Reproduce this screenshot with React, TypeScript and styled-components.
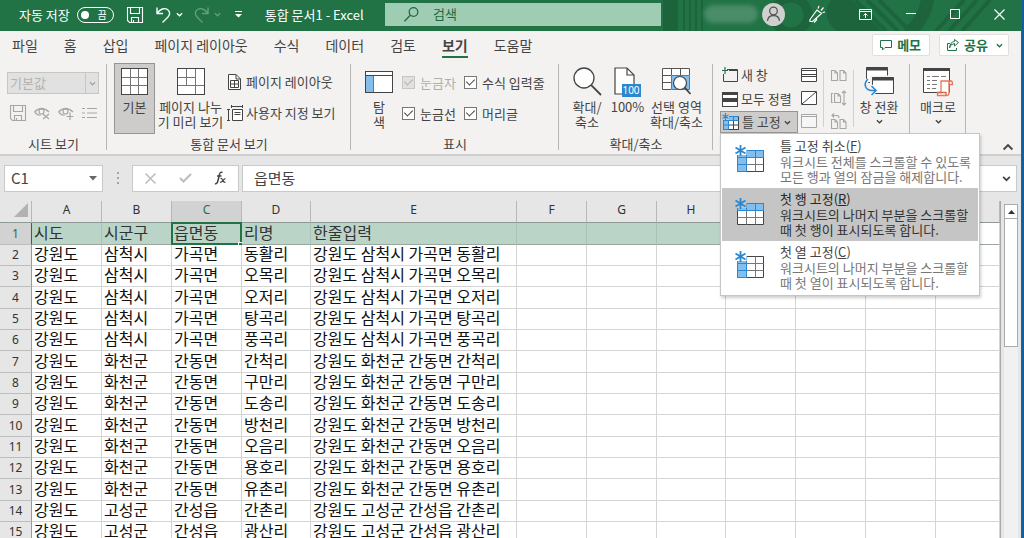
import React from "react";
import styled, { createGlobalStyle, css } from "styled-components";

const GREEN = "#217346";
const INK = "#444444";
const BLUE = "#2b88d0";
const SKY = "#83beec";
const FADED = "#a6a6a6";

const GlobalStyle = createGlobalStyle`
  *, *::before, *::after { box-sizing: border-box; }
  body { margin: 0; background: #10609f; }
  body, button, input, select, table {
    font-family: "Noto Sans CJK KR", "Noto Sans", sans-serif;
    font-size: 13px;
    color: ${INK};
  }
  button { padding: 0; border: 0; background: none; line-height: 15px; }
  svg { display: block; flex: none; overflow: visible; }
`;

/* ---------- shell ---------- */

const Desktop = styled.div`
  height: 100vh;
  padding-right: 2px;
  overflow: hidden;
  background: #10609f;
`;

const Window = styled.div`
  display: flex;
  flex-direction: column;
  height: 100%;
  border-right: 1px solid ${GREEN};
  background: #e6e6e6;
`;

/* ---------- title bar ---------- */

const TitleBar = styled.header`
  position: relative;
  display: flex;
  flex: none;
  height: 31px;
  padding-top: 3px;
  background: ${GREEN};
  color: #fff;
  overflow: hidden;
`;

const TitlePattern = styled.svg`
  position: absolute;
  top: 0;
  right: 0;
`;

const QuickAccess = styled.div`
  display: flex;
  flex: 0 0 385px;
  align-items: center;
  height: 23px;
  padding-left: 19px;
  white-space: nowrap;
`;

const SwitchLabel = styled.label`
  display: flex;
  align-items: center;
  gap: 7px;
  margin-right: 13px;
  line-height: 20px;
`;

const SwitchTrack = styled.span`
  position: relative;
  display: flex;
  align-items: center;
  justify-content: flex-end;
  width: 37px;
  height: 16px;
  padding-right: 6px;
  border: 1px solid #fff;
  border-radius: 8px;
  font-size: 10px;
  line-height: 14px;
`;

const SwitchInput = styled.input`
  position: absolute;
  left: 3px;
  top: 3px;
  appearance: none;
  width: 8px;
  height: 8px;
  margin: 0;
  border-radius: 50%;
  background: #fff;
`;

const BarButton = styled.button<{ $gap?: number; $dim?: boolean }>`
  display: flex;
  align-items: center;
  gap: 5px;
  margin-right: ${(p) => p.$gap ?? 0}px;
  opacity: ${(p) => (p.$dim ? 0.3 : 1)};
`;

const DocumentTitle = styled.h1`
  margin: 0;
  font-size: 13px;
  font-weight: 400;
  line-height: 26px;
`;

const SearchBox = styled.label`
  position: relative;
  display: flex;
  flex: 0 1 276px;
  align-items: center;
  gap: 14px;
  height: 23px;
  padding: 0 0 1px 19px;
  background: #9fcdb3;
`;

const SearchInput = styled.input`
  flex: 1;
  min-width: 0;
  padding: 0;
  border: 0;
  outline: 0;
  background: transparent;
  line-height: 20px;
  color: #1d6a40;
  &::placeholder { color: #1d6a40; opacity: 1; }
`;

const Account = styled.div`
  position: relative;
  display: flex;
  align-items: center;
  height: 22px;
  margin-left: auto;
`;

const MaskedName = styled.span`
  width: 54px;
  height: 18px;
  margin-right: 4px;
  border-radius: 9px;
  background: #4a8c68;
  filter: blur(2px);
`;

const Avatar = styled.span`
  display: grid;
  place-items: center;
  width: 23px;
  height: 23px;
  border-radius: 50%;
  background: #d0d0d0;
`;

const WindowButtons = styled.div`
  display: flex;
  align-items: center;
  margin-left: 24px;
  margin-right: 16px;
  gap: 34px;
`;

/* ---------- tabs ---------- */

const TabBar = styled.nav`
  display: flex;
  flex: none;
  align-items: center;
  height: 30px;
  padding: 0 12px 2px;
  gap: 26px;
  background: #f3f2f1;
`;

const Tab = styled.a<{ $active?: boolean }>`
  position: relative;
  font-size: 14px;
  line-height: 20px;
  font-weight: ${(p) => (p.$active ? 700 : 400)};
  color: ${INK};
  text-decoration: none;
  white-space: nowrap;
  ${(p) =>
    p.$active &&
    css`
      &::after {
        content: "";
        position: absolute;
        left: 0;
        right: 0;
        bottom: -3px;
        height: 2px;
        background: ${GREEN};
      }
    `}
`;

const TabActions = styled.div`
  display: flex;
  gap: 9px;
  margin-left: auto;
`;

const ActionButton = styled.button`
  display: flex;
  align-items: center;
  gap: 5px;
  height: 22px;
  padding: 0 5px 0 7px;
  border: 1px solid #e1dfdd;
  border-radius: 2px;
  background: #fff;
  font-weight: 700;
  line-height: 20px;
  color: ${GREEN};
`;

const ActionText = styled.span`
  padding-right: 3px;
`;

/* ---------- ribbon ---------- */

const Ribbon = styled.div`
  position: relative;
  z-index: 2;
  display: flex;
  flex: none;
  height: 95px;
  padding-top: 2px;
  border-bottom: 2px solid #cfcfcf;
  background: #f3f2f1;
`;

const GroupBox = styled.section<{ $width: number }>`
  display: flex;
  flex: 0 0 ${(p) => p.$width}px;
  flex-direction: column;
  position: relative;
  &::after {
    content: "";
    position: absolute;
    right: 0;
    top: 1px;
    height: 86px;
    width: 1px;
    background: #b8b6b4;
  }
`;

const GroupBody = styled.div<{ $left: number; $gap?: number }>`
  display: flex;
  height: 72px;
  gap: ${(p) => p.$gap ?? 0}px;
  padding-left: ${(p) => p.$left}px;
`;

const GroupLabel = styled.h2`
  margin: 0;
  font-size: 13px;
  font-weight: 400;
  line-height: 20px;
  text-align: center;
`;

const BigButton = styled.button<{ $width: number; $pressed?: boolean }>`
  display: flex;
  flex: 0 0 ${(p) => p.$width}px;
  flex-direction: column;
  align-items: center;
  height: 71px;
  border: 1px solid ${(p) => (p.$pressed ? "#979593" : "transparent")};
  background: ${(p) => (p.$pressed ? "#cdcccb" : "transparent")};
  white-space: nowrap;
`;

const BigIcon = styled.span`
  display: grid;
  place-items: center;
  height: 35px;
`;

const BigArrow = styled.span`
  padding-top: 4px;
`;

const Stack = styled.div<{ $top?: number; $gap?: number }>`
  display: flex;
  flex-direction: column;
  align-items: flex-start;
  gap: ${(p) => p.$gap ?? 0}px;
  padding-top: ${(p) => p.$top ?? 0}px;
`;

const SmallButton = styled.button<{ $height?: number }>`
  display: flex;
  align-items: center;
  gap: 3px;
  height: ${(p) => p.$height ?? 22}px;
  line-height: 20px;
  white-space: nowrap;
`;

const IconSlot = styled.span`
  display: grid;
  place-items: center;
  width: 17px;
`;

const IconColumn = styled.div<{ $width: number; $left: number }>`
  display: flex;
  flex: 0 0 ${(p) => p.$width}px;
  flex-direction: column;
  justify-content: space-around;
  height: 70px;
  padding-left: ${(p) => p.$left}px;
`;

const Picker = styled.span`
  position: relative;
  display: block;
  width: 92px;
  height: 22px;
  border: 1px solid #c6c6c6;
  background: #e1e1e1;
`;

const PickerSelect = styled.select`
  appearance: none;
  width: 100%;
  height: 20px;
  padding: 0 0 0 2px;
  border: 0;
  background: transparent;
  line-height: 20px;
  color: #b4b2b0;
  opacity: 1;
`;

const PickerArrow = styled.span`
  position: absolute;
  right: 0;
  top: 0;
  display: grid;
  place-items: center;
  width: 13px;
  height: 20px;
  border-left: 1px solid #c6c6c6;
  pointer-events: none;
`;

const ToolRow = styled.div`
  display: flex;
  align-items: center;
  gap: 8px;
  padding-left: 3px;
`;

const CheckGrid = styled.div`
  display: grid;
  grid-template-columns: 62px auto;
  grid-auto-rows: 31px;
  padding-top: 4px;
`;

const CheckLabel = styled.label<{ $off?: boolean }>`
  display: flex;
  align-items: center;
  gap: 5px;
  line-height: 20px;
  white-space: nowrap;
  color: ${(p) => (p.$off ? "#b1afad" : INK)};
`;

const CheckInput = styled.input`
  appearance: none;
  position: relative;
  width: 13px;
  height: 13px;
  margin: 0;
  border: 1px solid #777;
  background: #fff;
  &:checked::after {
    content: "";
    position: absolute;
    left: 3px;
    top: 0;
    width: 5px;
    height: 8px;
    border: solid #444;
    border-width: 0 1px 1px 0;
    transform: rotate(45deg);
  }
  &:disabled { border-color: #c6c6c6; background: #e1e1e1; }
  &:disabled::after { border-color: #b1afad; }
`;

const Divider = styled.span`
  width: 1px;
  height: 57px;
  margin-top: 7px;
  background: #d2d0ce;
`;

const MenuAnchor = styled.div`
  position: relative;
  margin-left: -2px;
`;

const FreezeButton = styled.button`
  display: flex;
  align-items: center;
  gap: 3px;
  width: 78px;
  height: 22px;
  padding-left: 2px;
  border: 1px solid #979593;
  background: #cdcccb;
  line-height: 20px;
  white-space: nowrap;
`;

const CollapseButton = styled.button`
  align-self: flex-end;
  margin: 0 8px 2px auto;
`;

/* ---------- drop-down menu ---------- */

const Menu = styled.div`
  position: absolute;
  z-index: 5;
  left: 0;
  top: 100%;
  width: 260px;
  padding: 1px;
  border: 1px solid #c6c6c6;
  background: #fff;
  box-shadow: 1px 2px 3px rgba(0, 0, 0, 0.2);
`;

const MenuItem = styled.button<{ $hover?: boolean }>`
  display: flex;
  gap: 15px;
  width: 100%;
  height: 53px;
  padding: 3px 0 0 13px;
  text-align: left;
  white-space: nowrap;
  background: ${(p) => (p.$hover ? "#c5c5c5" : "transparent")};
  color: ${(p) => (p.$hover ? "#262626" : INK)};
`;

const MenuIcon = styled.span`
  padding-top: 7px;
`;

const MenuTitle = styled.span`
  display: block;
  line-height: 16px;
`;

const MenuText = styled.span<{ $hover?: boolean }>`
  display: block;
  line-height: 15px;
  color: ${(p) => (p.$hover ? "#333333" : "#777777")};
`;

/* ---------- formula bar ---------- */

const FormulaRow = styled.div`
  display: flex;
  flex: none;
  align-items: center;
  height: 45px;
  padding: 0 4px 1px;
`;

const FieldBox = styled.div<{ $width?: number }>`
  display: flex;
  flex: ${(p) => (p.$width ? `0 0 ${p.$width}px` : "1")};
  align-items: center;
  min-width: 0;
  height: 27px;
  padding-right: 5px;
  border: 1px solid #c9c9c9;
  background: #fff;
`;

const FieldInput = styled.input<{ $left: number }>`
  flex: 1;
  min-width: 0;
  padding: 0 0 0 ${(p) => p.$left}px;
  border: 0;
  outline: 0;
  background: transparent;
  font-size: 15px;
  line-height: 22px;
`;

const FormulaTools = styled(FieldBox)`
  justify-content: space-between;
  margin-right: 3px;
  padding: 0 11px 0 12px;
`;

const Grip = styled.span`
  display: grid;
  place-items: center;
  flex: 0 0 29px;
`;

/* ---------- sheet ---------- */

const SheetArea = styled.div`
  display: flex;
  flex: 1;
  min-height: 0;
  overflow: hidden;
`;

const SheetPane = styled.div`
  flex: 1;
  min-width: 0;
`;

const Sheet = styled.table`
  width: 100%;
  table-layout: fixed;
  border-collapse: separate;
  border-spacing: 0;
  border-right: 1px solid #a8a8a8;
  background: #fff;
`;

const ColumnHead = styled.th<{ $active?: boolean }>`
  height: 22px;
  padding: 0 0 3px;
  border-right: 1px solid #b8b8b8;
  border-bottom: 1px solid ${(p) => (p.$active ? GREEN : "#8f9a94")};
  background: ${(p) => (p.$active ? "#d2d2d2" : "#e6e6e6")};
  font-family: "Noto Sans", sans-serif;
  font-size: 12px;
  line-height: 16px;
  font-weight: 400;
  color: ${(p) => (p.$active ? GREEN : "#333")};
`;

const Corner = styled(ColumnHead)`
  svg { margin-left: auto; margin-right: 3px; }
`;

const RowHead = styled.th<{ $active?: boolean }>`
  padding: 0;
  border-right: 1px solid ${(p) => (p.$active ? GREEN : "#9a9a9a")};
  border-bottom: 1px solid #bdbdbd;
  background: ${(p) => (p.$active ? "#d2d2d2" : "#e6e6e6")};
  font-family: "Noto Sans", sans-serif;
  font-size: 12px;
  line-height: 16px;
  font-weight: 400;
  color: ${(p) => (p.$active ? GREEN : "#333")};
`;

const Row = styled.tr`
  height: 21px;
  &:nth-child(3n + 1) { height: 22px; }
`;

const Cell = styled.td<{ $filled?: boolean; $head?: boolean; $selected?: boolean }>`
  position: relative;
  padding: 0 0 4px 2px;
  border-right: 1px solid ${(p) => (p.$filled ? "#a9c4b7" : "#d4d4d4")};
  border-bottom: 1px solid ${(p) => (p.$head ? "#9aa8a0" : "#d4d4d4")};
  background: ${(p) => (p.$filled ? "#bbd4c8" : "#fff")};
  font-size: 16px;
  line-height: 16px;
  color: ${(p) => (p.$head ? "#333" : "#111")};
  white-space: nowrap;
  ${(p) =>
    p.$selected &&
    css`
      &::before {
        content: "";
        position: absolute;
        inset: -1px -1px -1px -1px;
        border: 2px solid ${GREEN};
      }
      &::after {
        content: "";
        position: absolute;
        right: -3px;
        bottom: -3px;
        width: 6px;
        height: 5px;
        border: solid #fff;
        border-width: 1px 0 0 1px;
        background: ${GREEN};
      }
    `}
`;

const ScrollTrack = styled.div`
  flex: 0 0 14px;
  margin: 3px 3px 0 3px;
  background: #f1f1f1;
`;

const ScrollUp = styled.button`
  display: grid;
  place-items: center;
  width: 14px;
  height: 15px;
  border: 1px solid #ababab;
  background: #fff;
`;

const ScrollThumb = styled.div`
  height: 128px;
  border: 1px solid #ababab;
  border-top: 0;
  background: #fff;
`;

/* ---------- icons ---------- */

const Chevron = ({ color = INK, size = 7, up = false }: { color?: string; size?: number; up?: boolean }) => (
  <svg width={size} height={size} viewBox="0 0 8 8" fill="none" stroke={color} strokeWidth="1.5">
    <path d={up ? "M0.5 6L4 2.5L7.5 6" : "M1 2.5L4 5.5L7 2.5"} />
  </svg>
);

const SaveIcon = ({ color = "#fff" }: { color?: string }) => (
  <svg width="16" height="16" viewBox="0 0 16 16" fill="none" stroke={color} strokeWidth="1.1">
    <path d="M0.5 0.5H15.5V15.5H2.5L0.5 13.5Z M3.5 0.5V6.5H12.5V0.5 M4.5 15.5V10.5H11.5V15.5 M6.5 13V15" />
  </svg>
);

const UndoIcon = ({ flip = false }: { flip?: boolean }) => (
  <svg width="15" height="16" viewBox="0 0 15 16" fill="none" stroke="#fff" strokeWidth="1.4">
    <g transform={flip ? "matrix(-1 0 0 1 15 0)" : undefined}>
      <path d="M1 0.5V6.5H7 M1.3 6.2C4 2 8.500 0.500 11.500 2.500C14.500 4.800 14 8 12 10L6.500 15.500" />
    </g>
  </svg>
);

const NormalViewIcon = () => (
  <svg width="27" height="27" viewBox="0 0 27 27" fill="none" shapeRendering="crispEdges">
    <rect x="0.5" y="0.5" width="26" height="26" fill="#fff" stroke="#444" />
    <path d="M9.500 1V26M17.500 1V26M1 9.500H26M1 17.500H26" stroke="#777" />
  </svg>
);

const PageBreakIcon = () => (
  <svg width="28" height="27" viewBox="0 0 28 27" fill="none" shapeRendering="crispEdges">
    <rect x="0.5" y="0.5" width="27" height="26" fill="#fff" stroke="#444" />
    <path d="M9.500 1V17M1 9.500H18" stroke="#777" />
    <path d="M18.500 1V26M1 17.500H27" stroke={BLUE} />
  </svg>
);

const PageLayoutIcon = () => (
  <svg width="13" height="16" viewBox="0 0 13 16" fill="none" stroke="#444">
    <path d="M0.500 0.500H8L12.500 5V15.500H0.500Z" fill="#fff" />
    <path d="M8 0.500V5H12.500M2.500 6.500H10.500V13.500H2.500ZM6.500 6.500V13.500M2.500 10H10.500" />
  </svg>
);

const CustomViewIcon = () => (
  <svg width="16" height="16" viewBox="0 0 16 16" fill="none" stroke="#444">
    <path d="M0 4.500H3M0 15.500H3M1.500 4.500V15.500M4.500 0V3M15.500 0V3M4.500 1.500H15.500" />
    <path d="M5.500 4.500H15.500V15.500H5.500Z" fill="#fff" />
    <path d="M7.500 7.500H13.500M7.500 9.500H13.500" />
  </svg>
);

const NavigationIcon = () => (
  <svg width="28" height="22" viewBox="0 0 28 22" fill="none" shapeRendering="crispEdges">
    <rect x="0.500" y="0.500" width="27" height="21" fill="#fff" stroke="#444" />
    <rect x="1" y="5" width="8" height="16" fill={SKY} />
    <path d="M8.500 5V21" stroke={BLUE} />
    <path d="M1 4.500H27" stroke="#444" />
  </svg>
);

const ZoomIcon = () => (
  <svg width="29" height="29" viewBox="0 0 29 29" fill="none" stroke="#444" strokeWidth="1.3">
    <circle cx="11" cy="11" r="10" fill="#fff" />
    <path d="M18.200 18.200L28 28" strokeWidth="1.8" />
  </svg>
);

const HundredIcon = () => (
  <svg width="27" height="29" viewBox="0 0 27 29" fill="none">
    <path d="M1 1H13L20 8V27H1Z" fill="#fff" stroke="#444" strokeWidth="1.200" />
    <path d="M13 1V8H20" stroke="#444" strokeWidth="1.200" />
    <rect x="8" y="17" width="19" height="13" fill={BLUE} />
    <text x="17" y="27" fontSize="10" fill="#fff" textAnchor="middle" fontFamily="Noto Sans, sans-serif">
      100
    </text>
  </svg>
);

const ZoomSelectionIcon = () => (
  <svg width="29" height="27" viewBox="0 0 29 27" fill="none">
    <path d="M0.500 0.500H27.500V21.500H0.500Z" fill="#fff" />
    <path d="M10 8H27V21H10Z" fill={SKY} />
    <path d="M9.500 7.500H27.500V21.500H9.500Z" stroke={BLUE} />
    <path d="M18.500 1V7M9.500 0.500V7M0.500 7.500H9M0.500 14.500H9M9 21.500H0.500V0.500H27.500V7" stroke="#555" />
    <circle cx="18" cy="15" r="6.500" fill="#fff" stroke="#444" strokeWidth="1.200" />
    <path d="M22.700 19.700L28.500 26" stroke="#444" strokeWidth="1.800" />
  </svg>
);

const NewWindowIcon = () => (
  <svg width="16" height="14" viewBox="0 0 16 14" fill="none">
    <path d="M5 1.500H15.500V13.500H1.500V6" stroke="#444" />
    <path d="M7 2.500H15.500" stroke="#444" />
    <path d="M0 2.500H6M3 -1V6" stroke={GREEN} strokeWidth="1.200" />
  </svg>
);

const ArrangeIcon = () => (
  <svg width="16" height="15" viewBox="0 0 16 15" fill="none" stroke="#444" shapeRendering="crispEdges">
    <path d="M0.500 0.500H15.500V6.500H0.500ZM0.500 7.500H15.500V14.500H0.500Z" fill="#fff" />
    <path d="M1 2H15M1 9H15" strokeWidth="2" />
  </svg>
);

const FreezeSmallIcon = () => (
  <svg width="16" height="16" viewBox="0 0 16 16" fill="none">
    <path d="M0.500 2.500H15.500V15.500H0.500Z" fill="#fff" stroke="#444" />
    <path d="M1 3H15V6.500H6V15H1Z" fill={SKY} />
    <path d="M0.500 2.500H15.500M0.500 6.500H15.500M0.500 11H6M0.500 2.500V15.500H5.500M5.500 2.500V15.500M10.500 2.500V6.500" stroke={BLUE} />
    <path d="M6 11H15.500M10.500 7V15.500M6 15.500H15.500V7" stroke="#444" />
    <rect x="-1" y="0" width="7" height="6" fill="#cdcccb" />
    <path d="M2.500 -1V6M-0.500 1L5.500 4.500M5.500 1L-0.500 4.500" stroke={BLUE} strokeWidth="1.200" />
  </svg>
);

const SplitIcon = ({ kind }: { kind: "split" | "hide" | "unhide" }) => {
  const ink = kind === "unhide" ? FADED : "#444";
  return (
    <svg width="16" height="14" viewBox="0 0 16 14" fill="none" stroke={ink}>
      <path d="M0.500 0.500H15.500V13.500H0.500Z" fill={kind === "unhide" ? "#f6f6f6" : "#fff"} />
      {kind === "split" && <path d="M0.500 2.500H15.500M0.500 6.500H15.500M0.500 8.500H15.500" />}
      {kind === "hide" && <path d="M1 13L15 1" />}
      {kind === "unhide" && <path d="M0.500 2.500H15.500" />}
    </svg>
  );
};

const PagesIcon = ({ kind }: { kind: "side" | "sync" | "reset" }) => (
  <svg width="16" height="16" viewBox="0 0 16 16" fill="none" stroke={FADED} strokeWidth="1.100">
    {kind === "side" && <path d="M0.500 3.500H4L6.500 6V13.500H0.500ZM4 3.500V6H6.500M9 3.500H12.500L15 6V13.500H9ZM12.500 3.500V6H15" />}
    {kind === "sync" && (
      <path d="M2 3.500H0.500V12.500H2M3.500 3.500H7L9.500 6V12.500H3.500ZM7 3.500V6H9.500M13 1V15M11 3L13 1L15 3M11 13L13 15L15 13" />
    )}
    {kind === "reset" && (
      <path d="M0.500 6.500H4L6.500 9V15.500H0.500ZM4 6.500V9H6.500M9 6.500H12.500L15 9V15.500H9ZM12.500 6.500V9H15M1 2.500H6Q8 2.500 8 5M3 0.500L1 2.500L3 4.500" />
    )}
  </svg>
);

const SwitchWindowIcon = () => (
  <svg width="30" height="29" viewBox="0 0 30 29" fill="none">
    <path d="M2.500 0.500H23.500V15.500H2.500Z" fill="#fff" stroke="#444" />
    <path d="M2 2H24" stroke="#444" strokeWidth="3" />
    <path d="M6 8.500H31V28H6Z" fill="#f3f2f1" />
    <path d="M8.500 10.500H29.500V26.500H8.500Z" fill="#fff" stroke="#444" />
    <path d="M8 12H30" stroke="#444" strokeWidth="3" />
    <path d="M4 13C-1 17 1 23 8 23.500H11M7 19L11.500 23.500L7 28" stroke="#f3f2f1" strokeWidth="4" />
    <path d="M4 12C-1 17 1 23 8 23.500H12M7.500 19L12 23.500L7.500 28" stroke={BLUE} strokeWidth="1.500" />
  </svg>
);

const MacroIcon = () => (
  <svg width="30" height="29" viewBox="0 0 30 29" fill="none">
    <path d="M0.500 1.500H26.500V25.500H0.500Z" fill="#fff" stroke="#444" />
    <path d="M0 2.500H27" stroke="#444" strokeWidth="3" />
    <path
      d="M4 9.500H7M9 9.500H16M18 9.500H23M4 13.500H7M9 13.500H14M4 17.500H7M9 17.500H14M4 21.500H7M9 21.500H13"
      stroke="#777"
    />
    <path d="M18 14H28Q29.500 14 29.500 17.500H26V26Q26 28.500 23.500 28.500H14.500V25.500H18Z" fill="#fff" stroke="#e8735f" strokeWidth="1.300" />
    <path d="M26 17.500V15.500Q26 14 27.500 14M14.500 25.500H23V28" stroke="#d86a3a" strokeWidth="1.300" />
  </svg>
);

const FreezeIcon = ({ kind }: { kind: "both" | "row" | "column" }) => {
  const row = kind !== "column";
  const column = kind !== "row";
  return (
    <svg width="30" height="27" viewBox="0 0 30 27" fill="none">
      <path d="M2.500 5.500H28.500V26.500H2.500Z" fill="#fff" stroke="#444" />
      <path d="M2.500 12.500H28.500M2.500 19.500H28.500M11.500 5.500V26.500M20.500 5.500V26.500" stroke="#777" />
      {row && <path d="M2.500 5.500H28.500V12.500H2.500Z M11.500 5.500V12.500M20.500 5.500V12.500" fill={SKY} stroke={BLUE} />}
      {column && <path d="M2.500 5.500H11.500V26.500H2.500ZM2.500 12.500H11.500M2.500 19.500H11.500" fill={SKY} stroke={BLUE} />}
      <path d="M-1 0H11.500V10H-1Z" fill={kind === "row" ? "#c5c5c5" : "#fff"} />
      <path d="M5.500 0V11M0.500 2.500L10.500 8.500M10.500 2.500L0.500 8.500" stroke={BLUE} strokeWidth="1.800" />
    </svg>
  );
};

const EyeIcon = ({ mark }: { mark: "x" | "plus" }) => (
  <svg width="16" height="14" viewBox="0 0 16 14" fill="none" stroke={FADED} strokeWidth="1.200">
    <path d="M0.500 6Q7.500 -1 15 6M0.500 6Q3 9 6.500 9.500" />
    <circle cx="7.500" cy="5.500" r="2.500" />
    {mark === "x" ? <path d="M9 8L15 13M15 8L9 13" /> : <path d="M12 6.500V14M8.500 10.500H15.500" />}
  </svg>
);

const ListIcon = () => (
  <svg width="15" height="12" viewBox="0 0 15 12" fill="none" stroke={FADED} strokeWidth="1.200">
    <path d="M0 1.500H3M5 1.500H15M0 6H3M5 6H15M0 10.500H3M5 10.500H15" />
  </svg>
);

/* ---------- data ---------- */

const TABS = ["파일", "홈", "삽입", "페이지 레이아웃", "수식", "데이터", "검토", "보기", "도움말"];

const COLUMNS: { id: number; name?: string; width?: number }[] = [
  { id: 1, name: "A", width: 70 },
  { id: 2, name: "B", width: 70 },
  { id: 3, name: "C", width: 70 },
  { id: 4, name: "D", width: 69 },
  { id: 5, name: "E", width: 206 },
  { id: 6, name: "F", width: 70 },
  { id: 7, name: "G", width: 70 },
  { id: 8, name: "H", width: 69 },
  { id: 9, width: 70 },
  { id: 10, width: 70 },
  { id: 11, width: 70 },
  { id: 12 },
];

const PLACES: [string, string, string, string][] = [
  ["강원도", "삼척시", "가곡면", "동활리"],
  ["강원도", "삼척시", "가곡면", "오목리"],
  ["강원도", "삼척시", "가곡면", "오저리"],
  ["강원도", "삼척시", "가곡면", "탕곡리"],
  ["강원도", "삼척시", "가곡면", "풍곡리"],
  ["강원도", "화천군", "간동면", "간척리"],
  ["강원도", "화천군", "간동면", "구만리"],
  ["강원도", "화천군", "간동면", "도송리"],
  ["강원도", "화천군", "간동면", "방천리"],
  ["강원도", "화천군", "간동면", "오음리"],
  ["강원도", "화천군", "간동면", "용호리"],
  ["강원도", "화천군", "간동면", "유촌리"],
  ["강원도", "고성군", "간성읍", "간촌리"],
  ["강원도", "고성군", "간성읍", "광산리"],
];

const ROWS: string[][] = [
  ["시도", "시군구", "읍면동", "리명", "한줄입력"],
  ...PLACES.map((place) => [...place, place.join(" ")]),
];

const MENU: { kind: "both" | "row" | "column"; title: string; hotkey: string; lines: string[] }[] = [
  {
    kind: "both",
    title: "틀 고정 취소",
    hotkey: "F",
    lines: ["워크시트 전체를 스크롤할 수 있도록", "모든 행과 열의 잠금을 해제합니다."],
  },
  {
    kind: "row",
    title: "첫 행 고정",
    hotkey: "R",
    lines: ["워크시트의 나머지 부분을 스크롤할", "때 첫 행이 표시되도록 합니다."],
  },
  {
    kind: "column",
    title: "첫 열 고정",
    hotkey: "C",
    lines: ["워크시트의 나머지 부분을 스크롤할", "때 첫 열이 표시되도록 합니다."],
  },
];

/* ---------- pieces ---------- */

const Group = ({
  label,
  width,
  left,
  gap,
  children,
}: {
  label?: string;
  width: number;
  left: number;
  gap?: number;
  children: React.ReactNode;
}) => (
  <GroupBox $width={width}>
    <GroupBody $left={left} $gap={gap}>
      {children}
    </GroupBody>
    {label && <GroupLabel>{label}</GroupLabel>}
  </GroupBox>
);

const Big = ({
  icon,
  lines,
  width,
  pressed,
  arrow,
}: {
  icon: React.ReactNode;
  lines: string[];
  width: number;
  pressed?: boolean;
  arrow?: boolean;
}) => (
  <BigButton type="button" $width={width} $pressed={pressed}>
    <BigIcon>{icon}</BigIcon>
    {lines.map((line) => (
      <span key={line}>{line}</span>
    ))}
    {arrow && (
      <BigArrow>
        <Chevron />
      </BigArrow>
    )}
  </BigButton>
);

const Check = ({ label, disabled }: { label: string; disabled?: boolean }) => (
  <CheckLabel $off={disabled}>
    <CheckInput type="checkbox" defaultChecked disabled={disabled} />
    {label}
  </CheckLabel>
);

const TitleSection = () => (
  <TitleBar>
    <TitlePattern width="361" height="31" viewBox="0 0 361 31" fill="none" stroke="#1d643d">
      <path d="M3 0H18V31H3Z" fill="#1d643d" stroke="none" />
      <path d="M24 0V31M30 0V31M36 0V31M42 0V31" strokeWidth="2" />
      <circle cx="131" cy="15" r="17" strokeWidth="9" />
      <path d="M171 0H192L222 31H176Q160 16 171 0Z" fill="#1d643d" stroke="none" />
      <path d="M195 0L226 31M207 0L238 31M219 0L250 31" strokeWidth="4" />
      <path d="M268 -2Q264 20 248 34" strokeWidth="13" />
      <path d="M304 0L276 31M317 0L289 31M330 0L302 31" strokeWidth="4" />
    </TitlePattern>
    <QuickAccess>
      <SwitchLabel>
        자동 저장
        <SwitchTrack>
          <SwitchInput type="checkbox" role="switch" />끔
        </SwitchTrack>
      </SwitchLabel>
      <BarButton type="button" $gap={13} aria-label="저장">
        <SaveIcon />
      </BarButton>
      <BarButton type="button" $gap={11} aria-label="실행 취소">
        <UndoIcon />
        <Chevron color="#fff" />
      </BarButton>
      <BarButton type="button" $gap={14} $dim aria-label="다시 실행">
        <UndoIcon flip />
        <Chevron color="#fff" />
      </BarButton>
      <BarButton type="button" $gap={23} aria-label="빠른 실행 도구 모음 사용자 지정">
        <svg width="7" height="7" viewBox="0 0 7 7">
          <path d="M0 0H7V1H0ZM0 3H7L3.500 6.500Z" fill="#fff" />
        </svg>
      </BarButton>
      <DocumentTitle>통합 문서1 - Excel</DocumentTitle>
    </QuickAccess>
    <SearchBox>
      <svg width="15" height="15" viewBox="0 0 15 15" fill="none" stroke="#1d6a40" strokeWidth="1.300">
        <circle cx="9.500" cy="5" r="4.300" />
        <path d="M6.300 8.200L0.500 14.300" />
      </svg>
      <SearchInput type="text" placeholder="검색" aria-label="검색" />
    </SearchBox>
    <Account>
      <MaskedName />
      <Avatar>
        <svg width="15" height="16" viewBox="0 0 15 16" fill="none" stroke="#555" strokeWidth="1.300">
          <circle cx="7.500" cy="5" r="3.800" />
          <path d="M1.500 15Q2 9.500 7.500 9.500T13.500 15" />
        </svg>
      </Avatar>
      <WindowButtons>
        <BarButton type="button" aria-label="새로운 기능">
          <svg width="16" height="17" viewBox="0 0 16 17" fill="none" stroke="#fff" strokeWidth="1.200">
            <path d="M1 13.500L8 4L12.500 7.500L3.500 15.500L1 15.500ZM4 15L7.500 12V14L5 16.500M9 2.500L10 0M12 4.500L14.500 1.500M13.500 6.500L16 6" />
          </svg>
        </BarButton>
        <BarButton type="button" aria-label="리본 메뉴 표시 옵션">
          <svg width="13" height="11" viewBox="0 0 13 11" fill="none" stroke="#fff">
            <path d="M0.500 0.500H12.500V10.500H0.500ZM0.500 2.500H12.500M6.500 9V4.500M4.500 6.500L6.500 4.500L8.500 6.500" />
          </svg>
        </BarButton>
        <BarButton type="button" aria-label="최소화">
          <svg width="10" height="10" viewBox="0 0 10 10" stroke="#fff">
            <path d="M0 4.500H10" />
          </svg>
        </BarButton>
        <BarButton type="button" aria-label="최대화">
          <svg width="10" height="10" viewBox="0 0 10 10" fill="none" stroke="#fff">
            <path d="M0.500 0.500H9.500V9.500H0.500Z" />
          </svg>
        </BarButton>
        <BarButton type="button" aria-label="닫기">
          <svg width="11" height="11" viewBox="0 0 11 11" stroke="#fff" strokeWidth="1.200">
            <path d="M0.500 0.500L10.500 10.500M10.500 0.500L0.500 10.500" />
          </svg>
        </BarButton>
      </WindowButtons>
    </Account>
  </TitleBar>
);

const FreezeMenu = () => (
  <Menu role="menu">
    {MENU.map((item) => {
      const hover = item.kind === "row";
      return (
        <MenuItem key={item.kind} type="button" role="menuitem" $hover={hover}>
          <MenuIcon>
            <FreezeIcon kind={item.kind} />
          </MenuIcon>
          <span>
            <MenuTitle>
              {item.title}(<u>{item.hotkey}</u>)
            </MenuTitle>
            {item.lines.map((line) => (
              <MenuText key={line} $hover={hover}>
                {line}
              </MenuText>
            ))}
          </span>
        </MenuItem>
      );
    })}
  </Menu>
);

const RibbonSection = () => (
  <Ribbon>
    <Group label="시트 보기" width={107} left={7}>
      <Stack $top={9} $gap={11}>
        <Picker>
          <PickerSelect disabled aria-label="시트 보기">
            <option>기본값</option>
          </PickerSelect>
          <PickerArrow>
            <Chevron color={FADED} />
          </PickerArrow>
        </Picker>
        <ToolRow>
          <SaveIcon color={FADED} />
          <EyeIcon mark="x" />
          <EyeIcon mark="plus" />
          <ListIcon />
        </ToolRow>
      </Stack>
    </Group>

    <Group label="통합 문서 보기" width={244} left={7}>
      <Big icon={<NormalViewIcon />} lines={["기본"]} width={41} pressed />
      <Big icon={<PageBreakIcon />} lines={["페이지 나누", "기 미리 보기"]} width={71} />
      <Stack $top={8} $gap={9}>
        <SmallButton type="button">
          <IconSlot>
            <PageLayoutIcon />
          </IconSlot>
          페이지 레이아웃
        </SmallButton>
        <SmallButton type="button">
          <IconSlot>
            <CustomViewIcon />
          </IconSlot>
          사용자 지정 보기
        </SmallButton>
      </Stack>
    </Group>

    <Group label="표시" width={208} left={8} gap={3}>
      <Big icon={<NavigationIcon />} lines={["탐", "색"]} width={40} />
      <CheckGrid>
        <Check label="눈금자" disabled />
        <Check label="수식 입력줄" />
        <Check label="눈금선" />
        <Check label="머리글" />
      </CheckGrid>
    </Group>

    <Group label="확대/축소" width={154} left={8}>
      <Big icon={<ZoomIcon />} lines={["확대/", "축소"]} width={40} />
      <Big icon={<HundredIcon />} lines={["100%"]} width={41} />
      <Big icon={<ZoomSelectionIcon />} lines={["선택 영역", "확대/축소"]} width={57} />
    </Group>

    <Group width={197} left={9}>
      <Stack>
        <SmallButton type="button" $height={24}>
          <NewWindowIcon />새 창
        </SmallButton>
        <SmallButton type="button" $height={24}>
          <ArrangeIcon />
          모두 정렬
        </SmallButton>
        <MenuAnchor>
          <FreezeButton type="button" aria-haspopup="menu" aria-expanded="true">
            <FreezeSmallIcon />
            틀 고정
            <Chevron />
          </FreezeButton>
          <FreezeMenu />
        </MenuAnchor>
      </Stack>
      <IconColumn $width={25} $left={3}>
        <SplitIcon kind="split" />
        <SplitIcon kind="hide" />
        <SplitIcon kind="unhide" />
      </IconColumn>
      <Divider />
      <IconColumn $width={29} $left={7}>
        <PagesIcon kind="side" />
        <PagesIcon kind="sync" />
        <PagesIcon kind="reset" />
      </IconColumn>
      <Divider />
      <Big icon={<SwitchWindowIcon />} lines={["창 전환"]} width={50} arrow />
    </Group>

    <Group width={56} left={4}>
      <Big icon={<MacroIcon />} lines={["매크로"]} width={48} arrow />
    </Group>

    <CollapseButton type="button" aria-label="리본 메뉴 축소">
      <Chevron size={10} up />
    </CollapseButton>
  </Ribbon>
);

const SheetSection = () => (
  <SheetArea>
    <SheetPane>
      <Sheet>
        <colgroup>
          <col width={32} />
          {COLUMNS.map((c) => (
            <col key={c.id} width={c.width} />
          ))}
        </colgroup>
        <thead>
          <tr>
            <Corner aria-label="모두 선택">
              <svg width="14" height="14" viewBox="0 0 14 14">
                <path d="M14 0V14H0Z" fill="#b2b2b2" />
              </svg>
            </Corner>
            {COLUMNS.map((c) => (
              <ColumnHead key={c.id} scope="col" $active={c.name === "C"}>
                {c.name}
              </ColumnHead>
            ))}
          </tr>
        </thead>
        <tbody>
          {ROWS.map((row, r) => (
            <Row key={r}>
              <RowHead scope="row" $active={r === 0}>
                {r + 1}
              </RowHead>
              {COLUMNS.map((c, i) => (
                <Cell key={c.id} $head={r === 0} $filled={r === 0 && i < 8} $selected={r === 0 && i === 2}>
                  {row[i]}
                </Cell>
              ))}
            </Row>
          ))}
        </tbody>
      </Sheet>
    </SheetPane>
    <ScrollTrack>
      <ScrollUp type="button" aria-label="위로 스크롤">
        <svg width="7" height="4" viewBox="0 0 7 4">
          <path d="M0 4L3.500 0L7 4Z" fill="#333" />
        </svg>
      </ScrollUp>
      <ScrollThumb />
    </ScrollTrack>
  </SheetArea>
);

export default function App() {
  return (
    <Desktop>
      <GlobalStyle />
      <Window>
        <TitleSection />
        <TabBar>
          {TABS.map((tab) => (
            <Tab key={tab} href="#" $active={tab === "보기"}>
              {tab}
            </Tab>
          ))}
          <TabActions>
            <ActionButton type="button">
              <svg width="12" height="11" viewBox="0 0 12 11" fill="none" stroke={GREEN}>
                <path d="M0.500 0.500H11.500V7.500H5L2.500 10V7.500H0.500Z" />
              </svg>
              <ActionText>메모</ActionText>
            </ActionButton>
            <ActionButton type="button">
              <svg width="12" height="12" viewBox="0 0 12 12" fill="none" stroke={GREEN}>
                <path d="M3 4.500H0.500V11.500H9.500V9M2.500 9Q3 5 7.500 4.500V7L11.500 3.500L7.500 0.500V2.500Q3 3 2.500 9Z" />
              </svg>
              <ActionText>공유</ActionText>
              <Chevron color={GREEN} />
            </ActionButton>
          </TabActions>
        </TabBar>
        <RibbonSection />
        <FormulaRow>
          <FieldBox $width={99}>
            <FieldInput $left={6} defaultValue="C1" aria-label="이름 상자" />
            <svg width="8" height="5" viewBox="0 0 8 5">
              <path d="M0 0H8L4 4.500Z" fill="#666" />
            </svg>
          </FieldBox>
          <Grip>
            <svg width="2" height="12" viewBox="0 0 2 12">
              <path d="M0 0H2V2H0ZM0 5H2V7H0ZM0 10H2V12H0Z" fill="#a6a6a6" />
            </svg>
          </Grip>
          <FormulaTools $width={107}>
            <svg width="11" height="11" viewBox="0 0 11 11" stroke="#bdbdbd" strokeWidth="1.600">
              <path d="M0.500 0.500L10.500 10.500M10.500 0.500L0.500 10.500" />
            </svg>
            <svg width="13" height="10" viewBox="0 0 13 10" fill="none" stroke="#bdbdbd" strokeWidth="2">
              <path d="M1 5L4.500 8.500L12 1" />
            </svg>
            <svg width="13" height="14" viewBox="0 0 13 14" fill="none" stroke="#444">
              <path d="M1 12.500Q3 13.500 4 9.500L5.500 3.500Q6 0.500 8.500 1.500M3 5H7.500" strokeWidth="1.500" />
              <path d="M6.500 7.500Q8 7 8.500 9T11.500 11.500M11.500 7.500Q10 8 9 9.500T6 11.500" strokeWidth="1.200" />
            </svg>
          </FormulaTools>
          <FieldBox>
            <FieldInput $left={11} defaultValue="읍면동" aria-label="수식 입력줄" />
            <Chevron size={9} />
          </FieldBox>
        </FormulaRow>
        <SheetSection />
      </Window>
    </Desktop>
  );
}
